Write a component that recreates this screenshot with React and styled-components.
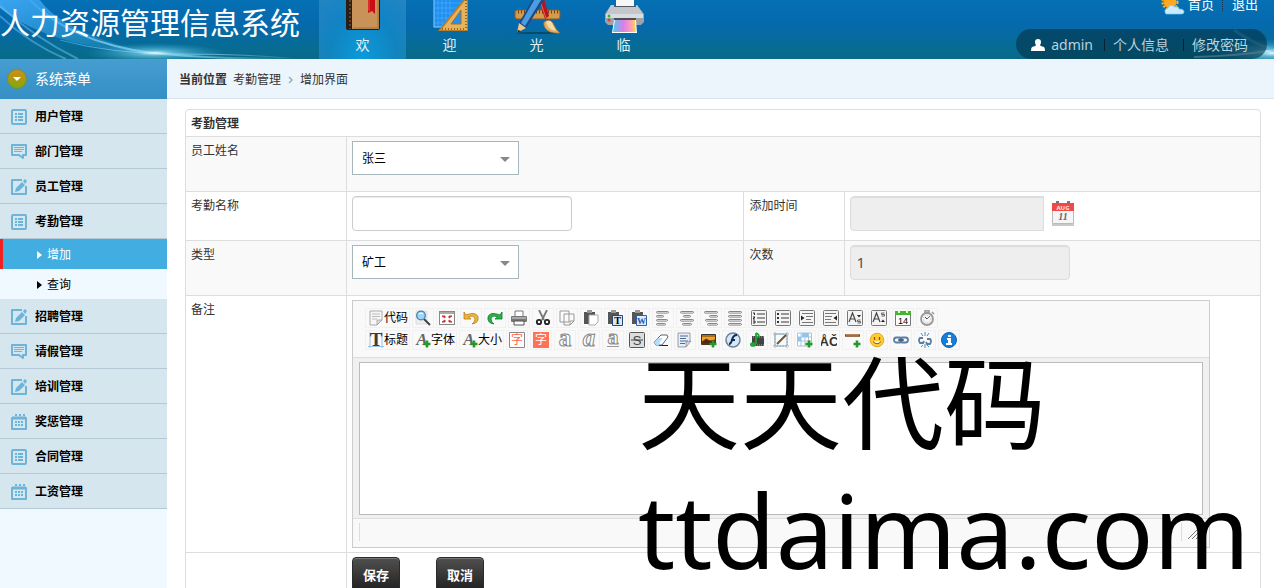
import React from "react";
import styled, { createGlobalStyle } from "styled-components";

const Global = createGlobalStyle`
  *, *::before, *::after { box-sizing: border-box; }
  body {
    margin: 0;
    background: #fff;
    color: #333;
    font: 12px/20px "Noto Sans", "Noto Sans CJK SC", sans-serif;
  }
  a { color: inherit; text-decoration: none; }
  button, input, select, textarea { font-family: inherit; }
  svg { display: block; flex: none; }
`;

const Page = styled.div`
  display: flex;
  flex-direction: column;
  height: 100vh;
  overflow: hidden;
`;

/* ---------- header ---------- */
const Header = styled.header`
  position: relative;
  display: flex;
  flex: none;
  height: 59px;
  overflow: hidden;
  background: linear-gradient(#0570b4, #0569ae 40%, #076c94 80%, #086a88);
  color: #fff;
`;
const Swoosh = styled.svg`
  position: absolute;
  top: 0;
  left: ${(p) => (p.$right ? "auto" : "0")};
  right: ${(p) => (p.$right ? "0" : "auto")};
`;
const Title = styled.h1`
  position: relative;
  margin: 0 19px 0 0;
  font-size: 30px;
  font-weight: 400;
  line-height: 46px;
  white-space: nowrap;
`;
const TopNav = styled.nav`
  position: relative;
  display: flex;
`;
const TopLink = styled.a`
  display: flex;
  flex-direction: column;
  align-items: center;
  width: 87px;
  height: 59px;
  font-size: 14px;
  color: #e4f1fa;
  background: ${(p) =>
    p.$active
      ? "radial-gradient(ellipse at 50% 100%, #0b9bdb, rgba(20,140,205,.75) 55%, rgba(60,150,205,.55))"
      : "none"};
`;
const TopRight = styled.div`
  position: relative;
  display: flex;
  flex-direction: column;
  align-items: flex-end;
  margin-left: auto;
`;
const Quick = styled.div`
  display: flex;
  align-items: center;
  gap: 3px;
  height: 30px;
  margin: -11px 16px 11px 0;
  font-size: 13px;
`;
const Dots = styled.span`
  height: 14px;
  margin: 0 6px 0 5px;
  border-left: 1px dotted #12344c;
`;
const UserBar = styled.div`
  display: flex;
  align-items: center;
  flex: none;
  height: 30px;
  margin-right: 7px;
  padding: 1px 19px 0 15px;
  border-radius: 15px;
  background: rgba(4, 50, 72, 0.6);
  color: #b9d2de;
  font-size: 14px;
`;
const UserName = styled.a`
  margin-left: 6px;
`;
const Bar = styled.span`
  width: 1px;
  height: 12px;
  margin: 0 8px 0 ${(p) => (p.$wide ? "14px" : "11px")};
  background: #06202f;
`;

/* ---------- sidebar ---------- */
const Body = styled.div`
  display: flex;
  flex: 1;
  min-height: 0;
`;
const Sidebar = styled.aside`
  flex: none;
  width: 167px;
  background: #f0f9ff;
`;
const SideHead = styled.h2`
  display: flex;
  align-items: center;
  gap: 8px;
  height: 40px;
  margin: 0;
  padding-left: 7px;
  background: linear-gradient(#469dd0, #358fc5);
  color: #fff;
  font-size: 14px;
  font-weight: 400;
`;
const SideItem = styled.a`
  display: flex;
  align-items: center;
  gap: 8px;
  height: 35px;
  padding: 2px 0 0 11px;
  border-bottom: 1px solid #b4c9d5;
  background: #d5e6ef;
  color: #000;
  font-weight: 700;
`;
const SubItem = styled.a`
  display: flex;
  align-items: center;
  gap: 5px;
  height: 30px;
  padding: 2px 0 0 34px;
  border-left: 3px solid ${(p) => (p.$active ? "#ee2222" : "transparent")};
  background: ${(p) => (p.$active ? "#41ade0" : "#f0f9ff")};
  color: ${(p) => (p.$active ? "#fff" : "#000")};
`;

/* ---------- content ---------- */
const Main = styled.main`
  position: relative;
  flex: 1;
  min-width: 0;
`;
const Crumbs = styled.nav`
  display: flex;
  align-items: center;
  gap: 6px;
  height: 40px;
  padding: 2px 0 0 12px;
  border-bottom: 1px solid #d5e4ec;
  background: #edf5fc;
`;
const Panel = styled.div`
  padding: 10px 13px 0 18px;
`;
const FormTable = styled.table`
  width: 100%;
  table-layout: fixed;
  border: 1px solid #ddd;
  border-radius: 4px;
  border-spacing: 0;
`;
const LabelCol = styled.col`
  width: ${(p) => (p.$narrow ? "101px" : "160px")};
`;
const ValueCol = styled.col`
  width: ${(p) => (p.$rest ? "auto" : "37%")};
`;
const Row = styled.tr`
  background: ${(p) => (p.$shade ? "#f9f9f9" : "#fff")};
`;
const Cell = styled.td`
  padding: 4px 5px;
  border-top: 1px solid #ddd;
  border-left: 1px solid #ddd;
  vertical-align: top;
  &:first-child { border-left: 0; }
`;
const HeadCell = styled.th`
  padding: 4px 5px 2px;
  text-align: left;
`;
const SelectBox = styled.div`
  position: relative;
  width: 167px;
  margin-bottom: 12px;
  &::after {
    content: "";
    position: absolute;
    top: 16px;
    right: 9px;
    border: 5px solid transparent;
    border-top-color: #888;
    border-bottom: 0;
    pointer-events: none;
  }
`;
const Select = styled.select`
  display: block;
  width: 100%;
  height: 34px;
  padding: 1px 9px 0;
  border: 1px solid #a7b5bd;
  border-radius: 0;
  background: #fff;
  color: #000;
  font-size: 12px;
  appearance: none;
`;
const Input = styled.input`
  display: block;
  width: ${(p) => (p.$joined ? "194px" : "220px")};
  height: 35px;
  padding: 0 5px 2px;
  border: 1px solid ${(p) => (p.readOnly ? "#ddd" : "#ccc")};
  border-radius: ${(p) => (p.$joined ? "4px 0 0 4px" : "4px")};
  background: ${(p) => (p.readOnly ? "#eee" : "#fff")};
  box-shadow: inset 0 1px 1px rgba(0, 0, 0, 0.08);
  color: #555;
  font-size: 15px;
`;
const Field = styled.div`
  display: flex;
  align-items: center;
  gap: 7px;
  margin-bottom: 5px;
`;
const IconButton = styled.button`
  padding: 0;
  border: 0;
  background: none;
`;

/* ---------- rich text editor ---------- */
const Editor = styled.div`
  width: 95%;
  border: 1px solid #ccc;
  background: #f0f0ee;
`;
const Tools = styled.div`
  display: flex;
  flex-direction: column;
  gap: 2px;
  height: 57px;
  padding: 7px 12px;
  border-bottom: 1px solid #ddd;
  background: #f9f9f9;
`;
const ToolRow = styled.div`
  display: flex;
  gap: 2px;
`;
const Tool = styled.button`
  display: flex;
  align-items: center;
  width: ${(p) => (p.$text ? "45px" : "22px")};
  height: 20px;
  padding: 0 2px;
  border: 1px solid #f1f1f1;
  background: none;
  color: #000;
  font-size: 12px;
  line-height: 18px;
  white-space: nowrap;
`;
const EditArea = styled.textarea`
  display: block;
  width: calc(100% - 12px);
  height: 153px;
  margin: 4px 6px 3px;
  border: 1px solid #bbb;
  border-radius: 0;
  background: #fff;
  resize: none;
`;
const Status = styled.div`
  display: flex;
  justify-content: space-between;
  height: 29px;
  padding: 4px 9px 6px 6px;
  border-top: 1px solid #ddd;
  background: #f9f9f9;
`;
const StatusLine = styled.span`
  flex: 1;
  margin-right: 5px;
  border: solid #ddd;
  border-width: 0 1px;
`;
const Actions = styled.div`
  display: flex;
  gap: 36px;
`;
const DarkButton = styled.button`
  width: 48px;
  height: 36px;
  padding: 0 0 2px;
  border: 1px solid #2b2b2b;
  border-radius: 4px;
  background: linear-gradient(#505050, #1e1e1e);
  box-shadow: inset 0 1px 0 #777;
  color: #fff;
  font-size: 13px;
  font-weight: 700;
`;
const Watermark = styled.div`
  position: absolute;
  top: 281px;
  left: 471px;
  color: #000;
  white-space: nowrap;
  pointer-events: none;
`;
const MarkLine = styled.div`
  font-size: ${(p) => (p.$latin ? "103px" : "102px")};
  line-height: 126px;
`;

/* ---------- drawings ---------- */
const navArt = {
  book: (
    <>
      <rect x="13" y="-6" width="34" height="36" rx="2" fill="#2c1d12" />
      <rect x="19" y="-6" width="27" height="35" fill="#c99259" />
      <path d="M45 0v28M20 28h26" stroke="#a66c34" />
      <path d="M17 0v29" stroke="#8a6a48" strokeDasharray="2 2" />
      <path d="M35 0h7v14l-3-3-4 2z" fill="#c90d14" />
      <path d="M36 0v11" stroke="#f04a48" />
    </>
  ),
  design: (
    <>
      <rect x="14" y="-6" width="33" height="33" fill="#1f8ff0" stroke="#8fd0ff" />
      <path d="M18 0v26M22 0v26M26 0v26M30 0v26M14 3h32M14 8h32M14 13h32M14 18h32M14 23h32" stroke="#54aefb" strokeWidth=".6" />
      <path d="M18 31h30V-6z" fill="#b97d2b" />
      <path d="M21 30h26V-2z" fill="#e6b35d" />
      <path d="M31 24h10V10z" fill="#2590ec" stroke="#a76f26" />
      <path d="M46 0v28" stroke="#9c6522" strokeWidth="2" strokeDasharray="1 2" />
      <path d="M22 29h24" stroke="#9c6522" strokeWidth="2" strokeDasharray="1 2" />
    </>
  ),
  tools: (
    <>
      <ellipse cx="30" cy="33" rx="21" ry="1" fill="#054a66" />
      <rect x="8" y="10" width="45" height="9" rx="2" fill="#d59a4b" stroke="#8d5922" />
      <path d="M11 12h40" stroke="#6c421a" strokeWidth="3" strokeDasharray="1 2" />
      <path d="M30-6l5-2 7 24-4 3z" fill="#b91419" />
      <path d="M32-2l7 20" stroke="#f16055" />
      <path d="M37 22q5-4 9 1 3 7 7 10-11 1-15-5-2-4-1-6z" fill="#e2ad65" stroke="#9a6729" strokeWidth=".7" />
      <path d="M39 22q4-3 6 1l4 8q-8-1-10-9z" fill="#f7d9a5" />
      <path d="M29-7l10 4-20 31-8 5 1-10z" fill="#174a8b" />
      <path d="M30-5l6 2-18 29-4-3z" fill="#4d9be0" />
      <path d="M12 23l7 5-9 5z" fill="#efc887" />
      <path d="M11 30l3 1-4 2z" fill="#222" />
    </>
  ),
  printer: (
    <>
      <path d="M17 5h26l7 9v8l-3 3H14l-3-3v-8z" fill="#9ea3a9" />
      <path d="M17 5h26l6 9H12z" fill="#c3c7cc" />
      <path d="M12 14h37v4H12z" fill="#d9dce0" />
      <path d="M20 5h22v2H20z" fill="#55595f" />
      <path d="M22-2h18v8H22z" fill="#f7f7f7" />
      <circle cx="15" cy="16" r="1.500" fill="#36b52b" />
      <circle cx="15" cy="20" r="1.500" fill="#e14237" />
      <path d="M20 18h22v3H20z" fill="#4b4f55" />
      <path d="M20 20h22l1 13H18z" fill="#fff" />
      <path d="M21 20h20l1 12H19z" fill="url(#inkBlend)" />
      <defs>
        <linearGradient id="inkBlend">
          <stop stopColor="#4ec9ec" />
          <stop offset=".45" stopColor="#da7ee8" />
          <stop offset=".75" stopColor="#ff9abb" />
          <stop offset="1" stopColor="#ffdc42" />
        </linearGradient>
      </defs>
    </>
  ),
};
const NavArt = ({ name }) => (
  <svg width="60" height="35" viewBox="0 0 60 35">{navArt[name]}</svg>
);

const sideArt = {
  list: (
    <>
      <rect x="1" y="1" width="14" height="14" rx="1" fill="none" stroke="#6cb4d8" strokeWidth="2" />
      <path d="M4 5h2M4 8h2M4 11h2M7 5h5M7 8h5M7 11h5" stroke="#6cb4d8" strokeWidth="2" />
    </>
  ),
  comment: (
    <>
      <path d="M1 1h14v10h-3v3l-4-3H1z" fill="none" stroke="#6cb4d8" strokeWidth="2" strokeLinejoin="round" />
      <path d="M3 3.500h10M3 5.500h10M3 7.500h8" stroke="#6cb4d8" />
    </>
  ),
  edit: (
    <>
      <path d="M11 1H1v14h14V7" fill="none" stroke="#6cb4d8" strokeWidth="2" strokeLinejoin="round" />
      <path d="M4 13l1-4 6-6 3 3-6 6zM12 2l2-2 2 2-2 3z" fill="#6cb4d8" />
    </>
  ),
  calendar: (
    <>
      <path d="M1 4h14v11H1z" fill="none" stroke="#6cb4d8" strokeWidth="2" strokeLinejoin="round" />
      <path d="M1 4h14" stroke="#6cb4d8" strokeWidth="3" />
      <path d="M4 0h2v2H4zM8 0h2v2H8zM12 0h2v2h-2zM4 7h2v2H4zM7 7h2v2H7zM10 7h2v2h-2zM4 10h2v2H4zM7 10h2v2H7zM10 10h2v2h-2z" fill="#6cb4d8" />
    </>
  ),
};
const SideArt = ({ name }) => (
  <svg width="16" height="16" viewBox="0 0 16 16">{sideArt[name]}</svg>
);

const frame = (
  <rect x=".5" y=".5" width="15" height="15" rx="1" fill="#f4f4f4" stroke="#777" />
);
const clip = (
  <>
    <path d="M1 2h11v12H1z" fill="#555" />
    <path d="M4 0h5v3H4z" fill="#999" />
  </>
);
const bars = (rows) =>
  rows.map(([x, w], i) => (
    <rect key={i} x={x + 0.5} y={1.5 + i * 4} width={w} height="1.6" rx=".8" fill="#fff" stroke="#777" strokeWidth=".9" />
  ));
const glyph = (ch, props) => (
  <text x="8" y="13" textAnchor="middle" fontSize="15" fontFamily="Liberation Serif, serif" {...props}>{ch}</text>
);
const plus = (
  <path d="M12 8.500v7M8.500 12h7" stroke="#24992a" strokeWidth="2.600" />
);
const hollow = { y: 14, fill: "#fff", stroke: "#888", strokeWidth: 1, fontSize: 25, fontWeight: 700 };

const toolArt = {
  source: (
    <>
      <path d="M2 1h12v9l-5 5H2z" fill="#f7f7f7" stroke="#aaa" />
      <path d="M4 4h8M4 6.500h8M4 9h5" stroke="#bbb" />
      <path d="M14 10H9v5z" fill="#ddd" stroke="#999" strokeWidth=".7" />
    </>
  ),
  preview: (
    <>
      <path d="M1 1h11v13H1z" fill="#eee" stroke="#ddd" />
      <path d="M9 9l6 6" stroke="#444" strokeWidth="2" />
      <circle cx="6" cy="5.500" r="4.300" fill="#9fd5f6" stroke="#4580b0" strokeWidth="1.300" />
      <path d="M4 4q2-2 4 0" stroke="#fff" fill="none" />
    </>
  ),
  full: (
    <>
      <rect x=".5" y="1.500" width="15" height="13" fill="#fff" stroke="#888" />
      <path d="M1 3h14" stroke="#aaa" strokeWidth="2" />
      <path d="M3 6h3v2zM13 6h-3v2zM3 12h3v-2zM13 12h-3v-2z" fill="#c33" stroke="#c33" />
    </>
  ),
  undo: (
    <path d="M1 2v7h7L5.500 7Q11 4.500 12 9q0 3-3 5 7-1 6-7-2-6-12-2z" fill="#f0b639" stroke="#b77c14" strokeWidth=".8" />
  ),
  redo: (
    <path d="M15 2v7H8l2.500-2Q5 4.500 4 9q0 3 3 5-7-1-6-7 2-6 12-2z" fill="#27b548" stroke="#10772a" strokeWidth=".8" />
  ),
  print: (
    <>
      <path d="M4 1h8v6H4z" fill="#fff" stroke="#777" />
      <rect x="0" y="6" width="16" height="6" rx="1" fill="#777" />
      <path d="M1 8h14" stroke="#ddd" />
      <path d="M3 11h10v4H3z" fill="#fff" stroke="#555" />
    </>
  ),
  cut: (
    <>
      <path d="M4 0l5 10M12 0L7 10" stroke="#777" strokeWidth="1.800" />
      <circle cx="4" cy="12" r="2.200" fill="none" stroke="#222" strokeWidth="1.800" />
      <circle cx="12" cy="12" r="2.200" fill="none" stroke="#222" strokeWidth="1.800" />
    </>
  ),
  copy: (
    <path d="M1 1h9v11H1zM5 4h10v7l-4 4H5zM15 11h-4v4" fill="#fafafa" stroke="#999" strokeLinejoin="round" />
  ),
  paste: (
    <>
      {clip}
      <path d="M6 5h9v7l-3 3H6z" fill="#fff" stroke="#aaa" />
    </>
  ),
  pasteText: (
    <>
      {clip}
      <path d="M5.500 5.500h10v10h-10z" fill="#dce7f5" stroke="#26496f" />
      {glyph("T", { x: 10.5, y: 14, fontSize: 10, fontWeight: 700 })}
    </>
  ),
  pasteWord: (
    <>
      {clip}
      <path d="M5.500 5.500h10v10h-10z" fill="#dceafd" stroke="#2962ad" />
      {glyph("W", { x: 10.5, y: 14, fontSize: 9, fontWeight: 700, fill: "#1955ad" })}
    </>
  ),
  left: bars([[1, 12], [1, 7], [1, 11], [1, 9]]),
  center: bars([[1, 13], [4, 7], [1, 13], [3, 9]]),
  right: bars([[1, 13], [6, 8], [2, 12], [4, 10]]),
  justify: bars([[1, 13], [1, 13], [1, 13], [1, 13]]),
  ol: (
    <>
      {frame}
      <path d="M6 4h8M6 8h8M6 12h8" stroke="#777" strokeWidth="1.300" />
      <path d="M2 3h1.500v2M2 7h2l-2 2h2M2 11h2v2H2" stroke="#222" fill="none" />
    </>
  ),
  ul: (
    <>
      {frame}
      <path d="M6 4h8M6 8h8M6 12h8" stroke="#777" strokeWidth="1.300" />
      <path d="M2 3h2v2H2zM2 7h2v2H2zM2 11h2v2H2z" fill="#333" />
    </>
  ),
  indent: (
    <>
      {frame}
      <path d="M3 3.500h11M7 6.500h7M7 9.500h5M3 12.500h11" stroke="#777" />
      <path d="M2 5.500l3.500 2.500L2 10.500z" fill="#222" />
    </>
  ),
  outdent: (
    <>
      {frame}
      <path d="M2 3.500h11M2 6.500h7M2 9.500h6M2 12.500h11" stroke="#777" />
      <path d="M14 5.500L10.500 8l3.500 2.500z" fill="#222" />
    </>
  ),
  sub: (
    <>
      {frame}
      <path d="M2 12l3.500-9L9 12M3.500 9h4" stroke="#444" fill="none" strokeWidth="1.200" />
      <path d="M10 5h4l-2 2.500z" fill="#222" />
      <path d="M13.500 10h-3v1.500h3V13h-3" stroke="#666" fill="none" />
    </>
  ),
  sup: (
    <>
      {frame}
      <path d="M2 12l3.500-9L9 12M3.500 9h4" stroke="#444" fill="none" strokeWidth="1.200" />
      <path d="M10 12h4l-2-2.500z" fill="#222" />
      <path d="M13.500 3h-3v1.500h3V6h-3" stroke="#666" fill="none" />
    </>
  ),
  date: (
    <>
      <path d="M.500 2.500h15v13H.500z" fill="#fff" stroke="#777" />
      <path d="M0 1h16v4H0z" fill="#45b52e" />
      <path d="M3 0h2v3H3zM11 0h2v3h-2z" fill="#e8f7e2" />
      {glyph("14", { y: 14, fontSize: 9, fontFamily: "Liberation Sans, sans-serif" })}
    </>
  ),
  time: (
    <>
      <path d="M6 0h4v3H6zM13 2l2 2" stroke="#999" fill="#bbb" strokeWidth="1.500" />
      <circle cx="8" cy="9" r="6" fill="#f5f5f5" stroke="#999" strokeWidth="1.800" />
      <circle cx="8" cy="9" r="3.800" fill="none" stroke="#bbb" strokeDasharray="1 1.500" />
      <path d="M8 9l3-3" stroke="#c44" />
      <path d="M8 9l-2-2" stroke="#444" />
    </>
  ),
  title: (
    <>
      <path d="M2 0v16M14 0v16M0 14.500h16" stroke="#9cc1ea" />
      {glyph("T", { y: 14, fontSize: 19, fontWeight: 700, fill: "#3b3b3b" })}
    </>
  ),
  font: (
    <>
      {glyph("A", { x: 7, y: 13, fontSize: 17, fontStyle: "italic", fontWeight: 700, fill: "#666" })}
      {plus}
    </>
  ),
  color: (
    <>
      <path d="M.500.500h15v15H.500z" fill="#fff" stroke="#888" />
      <text x="8" y="12" textAnchor="middle" fontSize="12" fill="#ff6347">字</text>
    </>
  ),
  back: (
    <>
      <path d="M0 0h16v16H0z" fill="#ff7256" />
      <text x="8" y="12" textAnchor="middle" fontSize="12" fill="#fff">字</text>
    </>
  ),
  bold: glyph("a", hollow),
  italic: glyph("a", { ...hollow, fontStyle: "italic" }),
  under: (
    <>
      {glyph("a", { ...hollow, fontSize: 22, y: 12 })}
      <path d="M2 14.500h12" stroke="#999" />
    </>
  ),
  strike: (
    <>
      <rect x=".5" y=".5" width="15" height="15" rx="1" fill="#ddd" stroke="#555" />
      {glyph("S", { y: 13, fontFamily: "Liberation Sans, sans-serif", fontSize: 13, fill: "#444" })}
      <path d="M2 8h12" stroke="#444" />
    </>
  ),
  erase: (
    <>
      <path d="M6 13.500h9" stroke="#222" />
      <path d="M1 10l7-7h6l1 2-6 8H3z" fill="#fff" stroke="#567" />
      <path d="M1 10l4-4h5l-3 4-1 3H3z" fill="#b9dcf6" />
    </>
  ),
  format: (
    <>
      <path d="M1 1h12v8l-4 6H1z" fill="#e7eef5" stroke="#99a" />
      <path d="M3 4h8M3 6.500h6M3 9h8M3 11.500h5" stroke="#4c6d96" />
      <path d="M14 9l-5 1v5z" fill="#cfd8e2" stroke="#889" strokeWidth=".7" />
    </>
  ),
  image: (
    <>
      <path d="M.500 2.500h14v10H.500z" fill="#f2a222" stroke="#333" />
      <path d="M1 4h13M1 10l4-3 4 2 5-1v4H1z" fill="#4a2b12" stroke="#6a3a12" />
      {plus}
    </>
  ),
  flash: (
    <>
      <circle cx="8" cy="8" r="7" fill="#d8e7f4" stroke="#68839d" strokeWidth="1.500" />
      <path d="M12 3Q8 3 7 8q-1 4-3 4M6 8h4" stroke="#0d2b5b" fill="none" strokeWidth="1.900" />
    </>
  ),
  media: (
    <>
      <path d="M3 4h12v10H3z" fill="#444" />
      <path d="M4 5h11M4 13h11" stroke="#aaa" strokeDasharray="1 1" />
      <path d="M7 1v11M7 1q3 1 3 4" stroke="#1ea632" fill="none" strokeWidth="1.800" />
      <ellipse cx="4" cy="12.500" rx="3" ry="2.300" fill="#1ea632" />
    </>
  ),
  map: (
    <>
      <path d="M2 2h12v12H2z" fill="#f5fafd" stroke="#74aacd" />
      <path d="M0 2h16M0 14h16M2 0v16M14 0v16" stroke="#aaa" strokeDasharray="2 1" />
      <path d="M4 12l9-9" stroke="#76502b" strokeWidth="2" />
    </>
  ),
  table: (
    <>
      <path d="M.500 1h14v13H.500zM4 1v13M8 1v13M11.500 1v13M.500 5h14M.500 9h14" fill="#fff" stroke="#aac3d5" />
      <path d="M5 1h6v4H5zM1 5h3v4H1z" fill="#8ec4f3" />
      {plus}
    </>
  ),
  special: (
    <text x="8" y="14" textAnchor="middle" fontSize="13" fontWeight="700" fill="#333" fontFamily="Liberation Sans, sans-serif">ÅČ</text>
  ),
  hr: (
    <>
      <path d="M0 3.500h15" stroke="#7b431c" strokeWidth="2.500" />
      <path d="M1 3h13" stroke="#d89354" />
      {plus}
    </>
  ),
  smile: (
    <>
      <circle cx="8" cy="8" r="6.800" fill="#ffcd32" stroke="#e9a51c" />
      <path d="M5.500 5v3M10.500 5v3" stroke="#8c5411" strokeWidth="1.300" />
      <path d="M4 9.500q4 4.500 8 0" fill="#fff" stroke="#8c5411" />
    </>
  ),
  link: (
    <>
      <rect x="1" y="5.500" width="8" height="5" rx="2.500" fill="none" stroke="#5a7da6" strokeWidth="1.800" />
      <rect x="7" y="5.500" width="8" height="5" rx="2.500" fill="none" stroke="#5a7da6" strokeWidth="1.800" />
      <path d="M5 8h6" stroke="#334e75" strokeWidth="1.300" />
    </>
  ),
  unlink: (
    <>
      <path d="M6 6H3q-2 2 0 5h3l1-2M10 7h3q2 2 0 5h-3l-1-2" fill="none" stroke="#5a7da6" strokeWidth="1.800" />
      <path d="M8 0v4M4 1l2 3M12 1l-2 3M8 12v4M4 15l2-2M12 15l-2-2" stroke="#4c8ac9" />
    </>
  ),
  about: (
    <>
      <circle cx="8" cy="8" r="7.500" fill="#167edb" stroke="#0e61b3" />
      <path d="M7 3h3v2H7zM6 6h4v5h1v2H5v-2h2V8H6z" fill="#fff" />
    </>
  ),
};

const toolRows = [
  [["source", "代码"], ["preview"], ["full"], ["undo"], ["redo"], ["print"], ["cut"], ["copy"], ["paste"], ["pasteText"], ["pasteWord"], ["left"], ["center"], ["right"], ["justify"], ["ol"], ["ul"], ["indent"], ["outdent"], ["sub"], ["sup"], ["date"], ["time"]],
  [["title", "标题"], ["font", "字体"], ["font", "大小"], ["color"], ["back"], ["bold"], ["italic"], ["under"], ["strike"], ["erase"], ["format"], ["image"], ["flash"], ["media"], ["map"], ["table"], ["special"], ["hr"], ["smile"], ["link"], ["unlink"], ["about"]],
];

const menu = [
  ["list", "用户管理"],
  ["comment", "部门管理"],
  ["edit", "员工管理"],
  ["list", "考勤管理", ["增加", "查询"]],
  ["edit", "招聘管理"],
  ["comment", "请假管理"],
  ["edit", "培训管理"],
  ["calendar", "奖惩管理"],
  ["list", "合同管理"],
  ["calendar", "工资管理"],
];

const Triangle = () => (
  <svg width="5" height="8" viewBox="0 0 5 8"><path d="M0 0l5 4-5 4z" fill="currentColor" /></svg>
);

function Rays() {
  return (
    <>
      <defs>
        <radialGradient id="flare">
          <stop stopColor="#e6fbff" />
          <stop offset=".25" stopColor="#7fd3ee" stopOpacity=".7" />
          <stop offset="1" stopColor="#2aa3d4" stopOpacity="0" />
        </radialGradient>
        <linearGradient id="beam" x1="0" x2="1">
          <stop stopColor="#3fa9f5" stopOpacity=".7" />
          <stop offset=".5" stopColor="#b4ecff" stopOpacity=".8" />
          <stop offset="1" stopColor="#b4ecff" stopOpacity="0" />
        </linearGradient>
        <linearGradient id="veil" x2="1" y2="1">
          <stop stopColor="#3fa9f8" stopOpacity=".9" />
          <stop offset="1" stopColor="#3fb0e0" stopOpacity=".1" />
        </linearGradient>
      </defs>
      <path d="M0 0h40q24 34 112 53Q50 48 0 8z" fill="url(#veil)" />
      <path d="M0 6Q35 38 78 59M0 16Q30 44 66 59" fill="none" stroke="#7ccaf4" strokeOpacity=".45" strokeWidth="2" />
      <path d="M30 0Q70 42 152 53 220 60 290 58" fill="none" stroke="url(#beam)" strokeWidth="2" />
      <path d="M60 40Q110 54 180 54T300 59" fill="none" stroke="url(#beam)" />
      <ellipse cx="155" cy="53" rx="70" ry="10" fill="url(#flare)" />
    </>
  );
}

function Picker({ id, value }) {
  return (
    <SelectBox>
      <Select id={id} defaultValue={value}><option>{value}</option></Select>
    </SelectBox>
  );
}

export default function App() {
  return (
    <Page>
      <Global />
      <Header>
        <Swoosh width="320" height="59" viewBox="0 0 320 59"><Rays /></Swoosh>
        <Swoosh $right width="90" height="59" viewBox="0 0 90 59">
          <ellipse cx="88" cy="53" rx="56" ry="14" fill="url(#flare)" />
          <path d="M10 57Q56 56 90 50" stroke="#c5ecf8" strokeOpacity=".7" strokeWidth="2" fill="none" />
          <path d="M50 30Q70 44 90 50" stroke="#58b4e0" strokeOpacity=".5" strokeWidth="3" fill="none" />
        </Swoosh>
        <Title>人力资源管理信息系统</Title>
        <TopNav>
          <TopLink href="#" $active><NavArt name="book" />欢</TopLink>
          <TopLink href="#"><NavArt name="design" />迎</TopLink>
          <TopLink href="#"><NavArt name="tools" />光</TopLink>
          <TopLink href="#"><NavArt name="printer" />临</TopLink>
        </TopNav>
        <TopRight>
          <Quick>
            <svg width="24" height="24" viewBox="0 -6 24 24">
              <circle cx="9" cy="4" r="7.500" fill="none" stroke="#ffb52b" strokeWidth="2" strokeDasharray="2 1.500" />
              <circle cx="9" cy="4" r="6.500" fill="#ffa81f" />
              <path d="M5 16q-3-4 2-6 2-5 7-1 4-1 4 2 5 0 5 3 0 2-3 2z" fill="#c7ecff" stroke="#7cc8ee" strokeWidth=".7" />
            </svg>
            <a href="#">首页</a>
            <Dots />
            <a href="#">退出</a>
          </Quick>
          <UserBar>
            <svg width="14" height="12" viewBox="0 0 14 12">
              <path d="M7 0q3 0 3 3 0 2-1 3 0 1 4 2 1 1 1 4H0Q0 9 1 8q4-1 4-2-1-1-1-3 0-3 3-3z" fill="#fff" />
            </svg>
            <UserName href="#">admin</UserName>
            <Bar />
            <a href="#">个人信息</a>
            <Bar $wide />
            <a href="#">修改密码</a>
          </UserBar>
        </TopRight>
      </Header>

      <Body>
        <Sidebar>
          <SideHead>
            <svg width="20" height="20" viewBox="0 0 20 20">
              <defs>
                <linearGradient id="knob" x2="0" y2="1">
                  <stop stopColor="#d98a14" />
                  <stop offset="1" stopColor="#7cab0f" />
                </linearGradient>
              </defs>
              <circle cx="10" cy="10" r="9.500" fill="url(#knob)" stroke="#6f8f30" strokeWidth=".8" />
              <path d="M6 8h8l-4 4z" fill="#fff" />
            </svg>
            系统菜单
          </SideHead>
          {menu.map(([icon, label, children]) => (
            <React.Fragment key={label}>
              <SideItem href="#"><SideArt name={icon} />{label}</SideItem>
              {children && children.map((c, i) => (
                <SubItem key={c} href="#" $active={i === 0}><Triangle />{c}</SubItem>
              ))}
            </React.Fragment>
          ))}
        </Sidebar>

        <Main>
          <Crumbs>
            <b>当前位置</b>
            <a href="#">考勤管理</a>
            <svg width="7" height="8" viewBox="0 0 7 8"><path d="M2 1l3 3-3 3" fill="none" stroke="#9bb0bd" strokeWidth="1.500" /></svg>
            <a href="#">增加界面</a>
          </Crumbs>
          <Panel>
            <FormTable>
              <colgroup>
                <LabelCol />
                <ValueCol />
                <LabelCol $narrow />
                <ValueCol $rest />
              </colgroup>
              <thead>
                <tr><HeadCell colSpan={4}>考勤管理</HeadCell></tr>
              </thead>
              <tbody>
                <Row $shade>
                  <Cell><label htmlFor="employee">员工姓名</label></Cell>
                  <Cell colSpan={3}><Picker id="employee" value="张三" /></Cell>
                </Row>
                <Row>
                  <Cell><label htmlFor="name">考勤名称</label></Cell>
                  <Cell><Field><Input id="name" /></Field></Cell>
                  <Cell><label htmlFor="date">添加时间</label></Cell>
                  <Cell>
                    <Field>
                      <Input id="date" readOnly $joined />
                      <IconButton type="button" aria-label="添加时间">
                        <svg width="24" height="26" viewBox="0 0 24 26">
                          <path d="M1 23h22v2H1z" fill="#c9c9c9" />
                          <path d="M1.500 2.500h21v20h-21z" fill="#f5f5f5" stroke="#bbb" />
                          <path d="M1 2h22v8H1z" fill="#ef4a4a" />
                          <path d="M5 0h3v3H5zM16 0h3v3h-3z" fill="#777" />
                          <text x="12" y="9" textAnchor="middle" fontSize="6" fontWeight="700" fill="#ffe3e3">AUG</text>
                          <text x="12" y="19" textAnchor="middle" fontSize="10" fontWeight="700" fontStyle="italic" fill="#666" fontFamily="Liberation Serif, serif">11</text>
                        </svg>
                      </IconButton>
                    </Field>
                  </Cell>
                </Row>
                <Row $shade>
                  <Cell><label htmlFor="type">类型</label></Cell>
                  <Cell><Picker id="type" value="矿工" /></Cell>
                  <Cell><label htmlFor="count">次数</label></Cell>
                  <Cell><Input id="count" defaultValue="1" readOnly /></Cell>
                </Row>
                <Row>
                  <Cell><label htmlFor="remark">备注</label></Cell>
                  <Cell colSpan={3}>
                    <Editor>
                      <Tools>
                        {toolRows.map((row, r) => (
                          <ToolRow key={r}>
                            {row.map(([icon, text], i) => (
                              <Tool key={i} type="button" $text={!!text} aria-label={text || icon}>
                                <svg width="16" height="16" viewBox="0 0 16 16">{toolArt[icon]}</svg>
                                {text}
                              </Tool>
                            ))}
                          </ToolRow>
                        ))}
                      </Tools>
                      <EditArea id="remark" />
                      <Status>
                        <StatusLine />
                        <svg width="13" height="18" viewBox="0 0 13 18">
                          <path d="M1 16L12 5M5 16l7-7M9 16l3-3" stroke="#777" />
                        </svg>
                      </Status>
                    </Editor>
                  </Cell>
                </Row>
                <Row>
                  <Cell />
                  <Cell colSpan={3}>
                    <Actions>
                      <DarkButton type="submit">保存</DarkButton>
                      <DarkButton type="button">取消</DarkButton>
                    </Actions>
                  </Cell>
                </Row>
              </tbody>
            </FormTable>
          </Panel>
          <Watermark>
            <MarkLine>天天代码</MarkLine>
            <MarkLine $latin>ttdaima.com</MarkLine>
          </Watermark>
        </Main>
      </Body>
    </Page>
  );
}
